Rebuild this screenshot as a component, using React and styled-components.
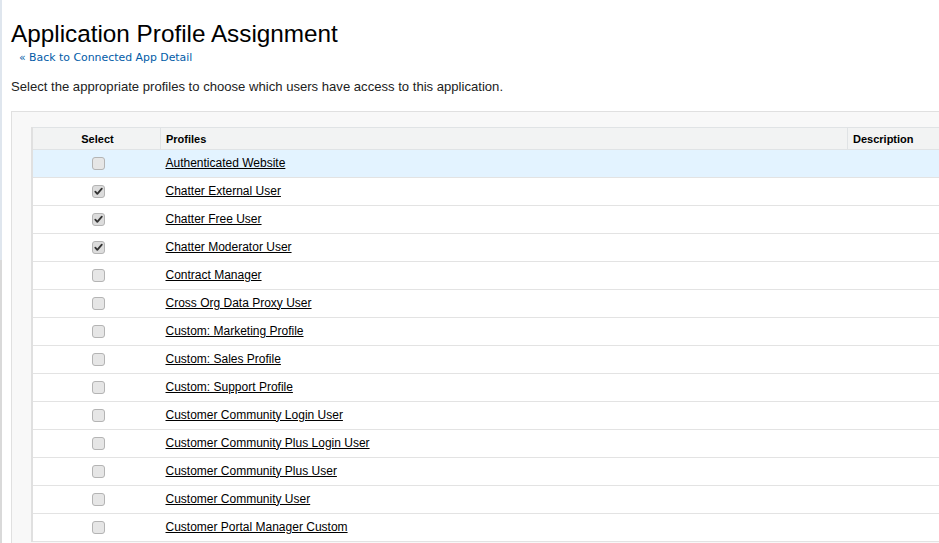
import styled, { createGlobalStyle } from "styled-components";

const Global = createGlobalStyle`
  body {
    margin: 0;
    background: #fff;
    font-family: Arial, "Liberation Sans", sans-serif;
    color: #000;
    overflow: hidden;
  }
`;

const Page = styled.div`
  display: flex;
  height: 543px;
  overflow: hidden;
`;

const EdgeStrip = styled.div`
  width: 2px;
  flex: none;
  background: linear-gradient(#dfe6ee 0, #dfe6ee 260px, #d9d9d9 260px);
`;

const Main = styled.div`
  flex: 1;
  padding: 20px 0 0 9px;
  min-width: 0;
`;

const Title = styled.h1`
  margin: 0;
  font-size: 24.3px;
  font-weight: normal;
  line-height: 28px;
  color: #000;
`;

const BackLink = styled.a`
  display: block;
  margin: 3px 0 0 8px;
  font-family: Verdana, "DejaVu Sans", sans-serif;
  font-size: 10.9px;
  line-height: 14px;
  color: #015ba7;
  text-decoration: none;
`;

const Intro = styled.p`
  margin: 14px 0 0;
  font-size: 13.1px;
  line-height: 16px;
  color: #222;
`;

const Panel = styled.div`
  margin-top: 16px;
  background: #f8f8f8;
  border: 1px solid #e0e0e0;
  border-right: none;
  padding: 15px 0 0 19px;
  height: 600px;
`;

const Table = styled.table`
  width: 100%;
  border-collapse: collapse;
  border-left: 2px solid #e0e0e0;
  background: #fff;
  font-size: 12px;
`;

const Th = styled.th`
  height: 21px;
  background: #f2f3f3;
  border-top: 1px solid #e0e3e5;
  border-bottom: 1px solid #e0e3e5;
  border-left: ${(p) => (p.$sep ? "1px solid #e0e3e5" : "none")};
  font-size: 11px;
  font-weight: bold;
  text-align: ${(p) => p.$align || "left"};
  padding: 0 5px;
  padding-left: ${(p) => (p.$align === "center" ? "7px" : "5px")};
  width: ${(p) => p.$w || "auto"};
`;

const Tr = styled.tr`
  background: ${(p) => (p.$hl ? "#e3f3ff" : "#fff")};
`;

const Td = styled.td`
  height: 25px;
  padding: 0 5px 2px;
  border-bottom: 1px solid #e3e3e3;
  text-align: ${(p) => p.$align || "left"};
  vertical-align: middle;
`;

const ProfileLink = styled.a`
  color: #000;
  text-decoration: underline;
  font-size: 12px;
`;

const Box = styled.span`
  display: inline-block;
  width: 11px;
  height: 11px;
  margin-left: 3px;
  border: 1px solid #b4b4b4;
  border-radius: 3px;
  background: ${(p) => (p.$on ? "#dcdcdc" : "#e6e6e6")};
  position: relative;
  vertical-align: middle;
`;

const Check = () => (
  <svg width="11" height="11" viewBox="0 0 11 11" style={{ position: "absolute", top: 0, left: 0 }}>
    <path d="M2.3 5.6 L4.3 7.8 L8.8 2.6" fill="none" stroke="#333" strokeWidth="1.8" strokeLinecap="round" strokeLinejoin="round" />
  </svg>
);

const rows = [
  ["Authenticated Website", false],
  ["Chatter External User", true],
  ["Chatter Free User", true],
  ["Chatter Moderator User", true],
  ["Contract Manager", false],
  ["Cross Org Data Proxy User", false],
  ["Custom: Marketing Profile", false],
  ["Custom: Sales Profile", false],
  ["Custom: Support Profile", false],
  ["Customer Community Login User", false],
  ["Customer Community Plus Login User", false],
  ["Customer Community Plus User", false],
  ["Customer Community User", false],
  ["Customer Portal Manager Custom", false],
];

export default function App() {
  return (
    <>
      <Global />
      <Page>
        <EdgeStrip />
        <Main>
          <Title>Application Profile Assignment</Title>
          <BackLink href="#">« Back to Connected App Detail</BackLink>
          <Intro>Select the appropriate profiles to choose which users have access to this application.</Intro>
          <Panel>
            <Table>
              <thead>
                <tr>
                  <Th $align="center" $w="115px">Select</Th>
                  <Th $sep $w="676px">Profiles</Th>
                  <Th $sep>Description</Th>
                </tr>
              </thead>
              <tbody>
                {rows.map(([name, on], i) => (
                  <Tr key={name} $hl={i === 0}>
                    <Td $align="center">
                      <Box $on={on}>{on && <Check />}</Box>
                    </Td>
                    <Td>
                      <ProfileLink href="#">{name}</ProfileLink>
                    </Td>
                    <Td />
                  </Tr>
                ))}
              </tbody>
            </Table>
          </Panel>
        </Main>
      </Page>
    </>
  );
}
